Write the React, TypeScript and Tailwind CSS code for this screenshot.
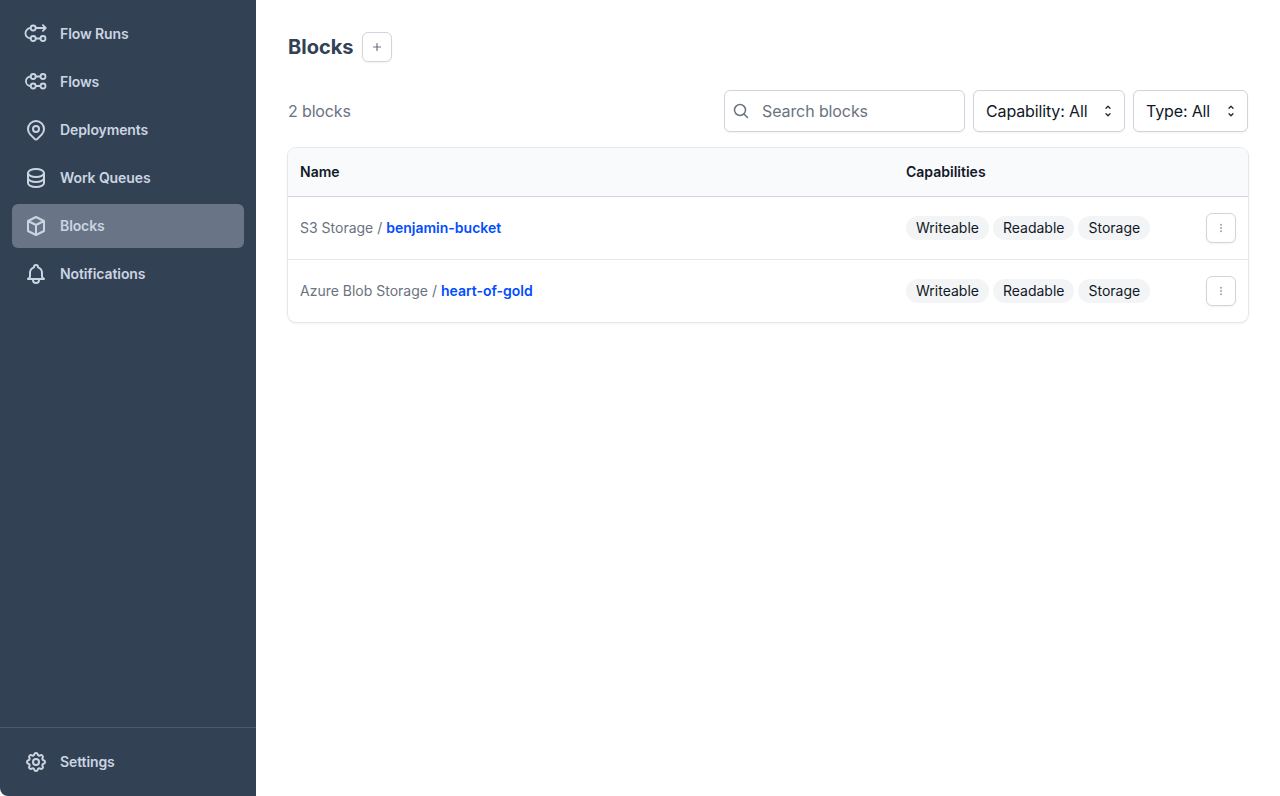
import React from "react";

const P = ({ d }: { d: string }) => <path d={d} />;

const iconClass = "w-6 h-6 shrink-0 fill-none stroke-current stroke-2 text-[#cbd5e1]";
const flowIconClass = "w-6 h-6 shrink-0 fill-none stroke-current stroke-[1.8] text-[#cbd5e1]";

function FlowRunsIcon() {
  return (
    <svg viewBox="0 0 24 24" className={flowIconClass} strokeLinecap="round" strokeLinejoin="round">
      <circle cx="9.2" cy="6" r="2.5" />
      <circle cx="9.2" cy="16.5" r="2.5" />
      <circle cx="19" cy="16.5" r="2.5" />
      <path d="M11.7 6H21.6M18.9 3.2 21.7 6l-2.8 2.8M11.7 16.5h4.8M6.7 6a5.25 5.25 0 0 0 0 10.5" />
    </svg>
  );
}

function FlowsIcon() {
  return (
    <svg viewBox="0 0 24 24" className={flowIconClass} strokeLinecap="round" strokeLinejoin="round">
      <circle cx="9.2" cy="6.5" r="2.5" />
      <circle cx="19" cy="6.5" r="2.5" />
      <circle cx="9.2" cy="16" r="2.5" />
      <circle cx="19" cy="16" r="2.5" />
      <path d="M11.7 6.5h4.8M11.7 16h4.8M6.7 6.5a4.75 4.75 0 0 0 0 9.5" />
    </svg>
  );
}

function OutlineIcon({ paths }: { paths: string[] }) {
  return (
    <svg viewBox="0 0 24 24" className={iconClass} strokeLinecap="round" strokeLinejoin="round">
      {paths.map((d) => (
        <P key={d} d={d} />
      ))}
    </svg>
  );
}

const location = [
  "M17.657 16.657L13.414 20.9a1.998 1.998 0 01-2.827 0l-4.244-4.243a8 8 0 1111.314 0z",
  "M15 11a3 3 0 11-6 0 3 3 0 016 0z",
];
const database = [
  "M4 7v10c0 2.21 3.582 4 8 4s8-1.79 8-4V7M4 7c0 2.21 3.582 4 8 4s8-1.79 8-4M4 7c0-2.21 3.582-4 8-4s8 1.79 8 4m0 5c0 2.21-3.582 4-8 4s-8-1.79-8-4",
];
const cube = ["M20 7l-8-4-8 4m16 0l-8 4m8-4v10l-8 4m0-10L4 7m8 4v10M4 7v10l8 4"];
const bell = [
  "M15 17h5l-1.405-1.405A2.032 2.032 0 0118 14.158V11a6.002 6.002 0 00-4-5.659V5a2 2 0 10-4 0v.341C7.67 6.165 6 8.388 6 11v3.159c0 .538-.214 1.055-.595 1.436L4 17h5m6 0v1a3 3 0 11-6 0v-1m6 0H9",
];
const cog = [
  "M10.325 4.317c.426-1.756 2.924-1.756 3.35 0a1.724 1.724 0 002.573 1.066c1.543-.94 3.31.826 2.37 2.37a1.724 1.724 0 001.065 2.572c1.756.426 1.756 2.924 0 3.35a1.724 1.724 0 00-1.066 2.573c.94 1.543-.826 3.31-2.37 2.37a1.724 1.724 0 00-2.572 1.065c-.426 1.756-2.924 1.756-3.35 0a1.724 1.724 0 00-2.573-1.066c-1.543.94-3.31-.826-2.37-2.37a1.724 1.724 0 00-1.065-2.572c-1.756-.426-1.756-2.924 0-3.35a1.724 1.724 0 001.066-2.573c-.94-1.543.826-3.31 2.37-2.37.996.608 2.296.07 2.572-1.065z",
  "M15 12a3 3 0 11-6 0 3 3 0 016 0z",
];

function NavItem({ icon, label, active }: { icon: React.ReactNode; label: string; active?: boolean }) {
  return (
    <a
      className={
        "flex h-11 items-center gap-3 rounded-md px-3 text-sm font-semibold tracking-[-0.1px] text-[#cbd5e1] " +
        (active ? "bg-[#697587]" : "")
      }
    >
      {icon}
      <span>{label}</span>
    </a>
  );
}

function Chevrons() {
  return (
    <svg viewBox="0 0 16 16" className="h-4 w-4 shrink-0 fill-none stroke-[#1f2937] stroke-[1.3]" strokeLinecap="round" strokeLinejoin="round">
      <path d="M6 5.2 8 3.2l2 2M6 10.8l2 2 2-2" />
    </svg>
  );
}

function Select({ label, width }: { label: string; width: string }) {
  return (
    <div className={"flex h-[42px] items-center justify-between rounded-md border border-[#d1d5db] bg-white pl-3 pr-2 text-base tracking-[-0.14px] text-[#111827] shadow-[0_1px_2px_rgba(0,0,0,0.05)] " + width}>
      <span>{label}</span>
      <Chevrons />
    </div>
  );
}

function Tag({ label }: { label: string }) {
  return (
    <span className="flex h-6 items-center rounded-full bg-[#f3f4f6] px-2.5 text-sm text-[#111827]">{label}</span>
  );
}

function Row({ type, name, last }: { type: string; name: string; last?: boolean }) {
  return (
    <div className={"flex items-center px-3 " + (last ? "h-[62px]" : "h-[63px] border-b border-[#e5e7eb]")}>
      <div className="w-[606px] text-sm text-[#6b7280]">
        {type} / <a className="font-semibold text-[#024dfd]">{name}</a>
      </div>
      <div className="flex flex-1 items-center gap-1">
        <Tag label="Writeable" />
        <Tag label="Readable" />
        <Tag label="Storage" />
      </div>
      <button className="flex h-[30px] w-[30px] items-center justify-center rounded-md border border-[#d1d5db] bg-white shadow-[0_1px_2px_rgba(0,0,0,0.05)]">
        <svg viewBox="0 0 16 16" className="h-4 w-4 fill-[#9ca3af]">
          <circle cx="8" cy="4.8" r="1" />
          <circle cx="8" cy="8" r="1" />
          <circle cx="8" cy="11.2" r="1" />
        </svg>
      </button>
    </div>
  );
}

export default function App() {
  return (
    <div className="flex h-[796px] w-[1280px] overflow-hidden bg-white font-['Inter',sans-serif]">
      <aside className="flex h-full w-64 shrink-0 flex-col rounded-bl-lg bg-[#334155]">
        <nav className="flex flex-1 flex-col gap-1 p-3">
          <NavItem icon={<FlowRunsIcon />} label="Flow Runs" />
          <NavItem icon={<FlowsIcon />} label="Flows" />
          <NavItem icon={<OutlineIcon paths={location} />} label="Deployments" />
          <NavItem icon={<OutlineIcon paths={database} />} label="Work Queues" />
          <NavItem icon={<OutlineIcon paths={cube} />} label="Blocks" active />
          <NavItem icon={<OutlineIcon paths={bell} />} label="Notifications" />
        </nav>
        <div className="border-t border-[#4b5a6e] p-3">
          <NavItem icon={<OutlineIcon paths={cog} />} label="Settings" />
        </div>
      </aside>
      <main className="flex-1 px-8 pt-8">
        <div className="flex h-[30px] items-center gap-2">
          <h1 className="text-xl font-bold text-[#334155]">Blocks</h1>
          <button className="flex h-[30px] w-[30px] items-center justify-center rounded-md border border-[#d1d5db] bg-white shadow-[0_1px_2px_rgba(0,0,0,0.05)]">
            <svg viewBox="0 0 16 16" className="h-4 w-4 fill-none stroke-[#6b7280]" strokeLinecap="round" strokeWidth="1.2">
              <path d="M8 4.5v7M4.5 8h7" />
            </svg>
          </button>
        </div>
        <div className="mt-7 flex items-center justify-between">
          <span className="text-base tracking-[-0.14px] text-[#6b7280]">2 blocks</span>
          <div className="flex items-center gap-2">
            <div className="flex h-[42px] w-[241px] items-center gap-2 rounded-md border border-[#d1d5db] bg-white pl-[5px] shadow-[0_1px_2px_rgba(0,0,0,0.05)]">
              <svg viewBox="0 0 20 20" className="h-5 w-5 fill-none stroke-[#6b7280] stroke-[1.5]" strokeLinecap="round">
                <circle cx="10" cy="9" r="5.5" />
                <path d="M14 13l3.5 3.5" />
              </svg>
              <span className="pl-1 text-base tracking-[-0.1px] text-[#6b7280]">Search blocks</span>
            </div>
            <Select label="Capability: All" width="w-[152px]" />
            <Select label="Type: All" width="w-[115px]" />
          </div>
        </div>
        <div className="mt-4 overflow-hidden rounded-lg bg-white shadow-[0_0_0_1px_#e5e7eb,0_1px_3px_rgba(0,0,0,0.1)]">
          <div className="flex h-[49px] items-center border-b border-[#d1d5db] bg-[#f9fafb] px-3 text-sm font-semibold text-[#111827]">
            <div className="w-[606px]">Name</div>
            <div>Capabilities</div>
          </div>
          <Row type="S3 Storage" name="benjamin-bucket" />
          <Row type="Azure Blob Storage" name="heart-of-gold" last />
        </div>
      </main>
    </div>
  );
}
